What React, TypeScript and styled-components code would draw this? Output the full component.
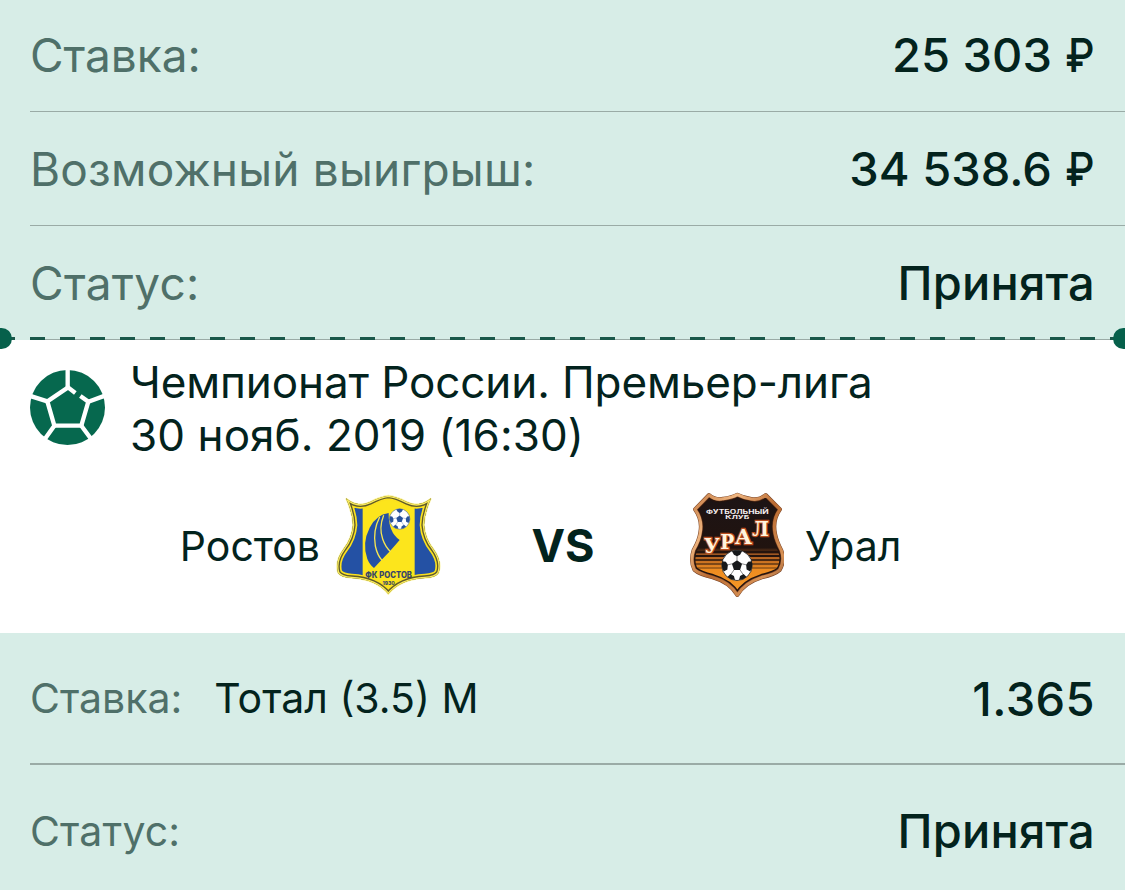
import * as React from "react";
import styled, { createGlobalStyle } from "styled-components";

const GlobalStyle = createGlobalStyle`
  body {
    margin: 0;
    background: #d7ede7;
    font-family: Inter, Roboto, "Liberation Sans", sans-serif;
    -webkit-font-smoothing: antialiased;
  }
`;

const Page = styled.main`
  width: 1125px;
  height: 890px;
  overflow: hidden;
  background: #d7ede7;
`;

const Summary = styled.section`
  position: relative;
`;

const Row = styled.div<{ $height: number; $line?: number; $top?: number }>`
  box-sizing: border-box;
  display: flex;
  align-items: center;
  height: ${(p) => p.$height}px;
  margin-left: 30px;
  padding-top: ${(p) => p.$top ?? 0}px;
  padding-right: 30px;
  border-bottom: ${(p) => p.$line ?? 0}px solid #9aaba6;
`;

const Text = styled.span<{ $size: number; $spacing?: number }>`
  font-size: ${(p) => p.$size}px;
  letter-spacing: ${(p) => p.$spacing ?? 0}px;
  line-height: 1.2;
  white-space: nowrap;
  color: #03231d;
`;

const Label = styled(Text)`
  color: #4f7069;
`;

const Value = styled(Text)`
  margin-left: auto;
  font-weight: 500;
`;

const Ruble = styled.span`
  display: inline-block;
  margin-left: -3px;
  font-weight: 550;
  transform: scaleX(0.87);
  transform-origin: right center;
`;

const Outcome = styled(Text)`
  margin-left: 32px;
`;

const Perforation = styled.div`
  position: absolute;
  left: 0;
  right: 0;
  bottom: 0;
  height: 3px;
  background: repeating-linear-gradient(to right, #1a584a 0 15px, transparent 15px 30px);
`;

const Notch = styled.i<{ $side: "left" | "right" }>`
  position: absolute;
  top: -9px;
  ${(p) => p.$side}: -9px;
  width: 21px;
  height: 21px;
  border-radius: 50%;
  background: #06604b;
`;

const Match = styled.section`
  box-sizing: border-box;
  height: 293px;
  padding-top: 16px;
  background: #fff;
`;

const MatchHeader = styled.header`
  display: flex;
  gap: 25px;
  padding-left: 30px;
  svg {
    margin-top: 14px;
  }
`;

const MatchInfo = styled.div`
  display: flex;
  flex-direction: column;
  ${Text} {
    line-height: 52.5px;
  }
`;

const Teams = styled.div`
  display: grid;
  grid-template-columns: 441px 244px 1fr;
  align-items: center;
  height: 106px;
  margin-top: 31px;
`;

const Team = styled.div<{ $home?: boolean }>`
  display: flex;
  align-items: center;
  justify-content: ${(p) => (p.$home ? "flex-end" : "flex-start")};
  gap: ${(p) => (p.$home ? 15 : 21)}px;
  padding-left: ${(p) => (p.$home ? 0 : 3)}px;
  ${Text} {
    padding-top: 3px;
  }
`;

const Versus = styled(Text)`
  padding-top: 2px;
  text-align: center;
  font-weight: 700;
`;

const BallIcon: React.FC = () => (
  <svg width="75" height="75" viewBox="90 209 225 225">
    <circle cx="202.5" cy="321.5" r="112.5" fill="#06684e" />
    <g fill="none" stroke="#fff" strokeWidth="13">
      <path d="M226 278 204 261 142 303 163 376H244L265 304 241 287" />
      <path d="M203 200V262M88 286 142 303M320 284 265 304M163 376 134 417M244 376 274 417" />
    </g>
  </svg>
);

// panels of a classic ball, drawn around 0,0 with a radius of 30
const Football: React.FC<{ x: number; y: number; scale: number; color: string }> = ({ x, y, scale, color }) => (
  <g transform={`translate(${x} ${y}) scale(${scale})`}>
    <circle r="30" fill="#fff" stroke={color} strokeWidth="1.5" />
    <g fill={color}>
      <path d="M0-10 10-3 6 9H-6L-10-3Z" />
      <path d="M-10-28Q0-32 10-28L6-21 0-18-6-21Z" />
      <path d="M29-8Q32 3 26 12L19 8 18-1 22-7Z" />
      <path d="M-29-8Q-32 3-26 12L-19 8-18-1-22-7Z" />
      <path d="M19 23Q12 29 4 29L6 21 13 17Z" />
      <path d="M-19 23Q-12 29-4 29L-6 21-13 17Z" />
    </g>
    <path d="M0-10V-19M10-3 18-1M-10-3-18-1M6 9 12 18M-6 9-12 18" stroke={color} strokeWidth="1" />
  </g>
);

const RostovCrest: React.FC = () => {
  const shield =
    "M78 55Q112 84 150 66Q184 49 205 47Q227 49 261 66Q299 84 333 55Q313 99 312 135Q315 176 340 207Q367 244 356 278Q348 292 315 294Q241 298 205 342Q169 298 95 294Q63 292 54 278Q44 243 71 207Q96 175 99 135Q98 98 78 55Z";
  return (
    <svg width="106" height="102" viewBox="45 42 318 306">
      <clipPath id="rostov-body">
        <path d={shield} />
      </clipPath>
      <path d={shield} fill="#fce51c" stroke="#fbf3a4" strokeWidth="5" />
      <g clipPath="url(#rostov-body)">
        <path d="M45 42H128V300H45ZM284 42H363V300H284Z" fill="#2451a4" />
        <path d={shield} fill="none" stroke="#fbe11d" strokeWidth="26" />
        <path d={shield} fill="none" stroke="#5f5a2a" strokeWidth="16" />
        <path d={shield} fill="none" stroke="#f9ea5c" strokeWidth="8" />
      </g>
      <path
        d="M206 99Q169 104 149 143Q125 190 142 237Q150 256 162 264L185 239 211 212 239 180Q205 157 206 99Z"
        fill="#2451a4"
      />
      <path
        d="M179 111Q158 152 166 198Q172 226 186 241M191 106Q176 144 188 177Q196 201 212 215"
        fill="none"
        stroke="#f7e650"
        strokeWidth="4"
      />
      <Football x={239} y={117} scale={1.02} color="#28529b" />
      <g fill="#35446a" textAnchor="middle" fontWeight="800">
        <text x="206" y="293" fontSize="25" textLength="140" lengthAdjust="spacingAndGlyphs">ФК РОСТОВ</text>
        <text x="206" y="315" fontSize="15" textLength="37" lengthAdjust="spacingAndGlyphs">1930</text>
      </g>
    </svg>
  );
};

const UralCrest: React.FC = () => {
  const shield =
    "M117 45Q138 62 160 56Q186 53 202 44Q219 53 244 57Q267 62 287 45L330 88Q307 119 315 160Q319 183 334 211Q345 243 329 270Q315 283 275 292Q224 308 202 345Q180 307 128 292Q87 282 73 269Q60 243 71 210Q88 181 91 157Q98 119 75 88Z";
  return (
    <svg width="96" height="106" viewBox="54 36 288 318">
      <defs>
        <linearGradient id="ural-field" x1="0" y1="0" x2="0" y2="1">
          <stop offset="0" stopColor="#1c1415" />
          <stop offset=".53" stopColor="#21130f" />
          <stop offset=".6" stopColor="#a65a23" />
          <stop offset=".74" stopColor="#ee8b20" />
          <stop offset="1" stopColor="#f79b28" />
        </linearGradient>
        <linearGradient id="ural-rim" x1="0" y1="0" x2="1" y2="1">
          <stop offset="0" stopColor="#c47b43" />
          <stop offset=".25" stopColor="#efb681" />
          <stop offset=".5" stopColor="#b96a31" />
          <stop offset=".8" stopColor="#d79155" />
          <stop offset="1" stopColor="#814727" />
        </linearGradient>
        <clipPath id="ural-body">
          <path d={shield} />
        </clipPath>
      </defs>
      <path d={shield} fill="url(#ural-field)" />
      <g clipPath="url(#ural-body)" stroke="#25140e">
        <path d="M60 216H340" strokeWidth="7" />
        <path d="M60 228H340" strokeWidth="6" />
        <path d="M60 240H340" strokeWidth="4" />
        <path d="M60 252H340" strokeWidth="3" />
        <path d="M60 264H340" strokeWidth="2" />
        <path d={shield} fill="none" strokeWidth="20" />
      </g>
      <path d={shield} fill="none" stroke="#774225" strokeWidth="12" strokeLinejoin="round" />
      <path d={shield} fill="none" stroke="url(#ural-rim)" strokeWidth="9" strokeLinejoin="round" />
      <g fill="#f4eeee" textAnchor="middle" fontWeight="700">
        <text x="202" y="101" fontSize="17" textLength="188" lengthAdjust="spacingAndGlyphs">ФУТБОЛЬНЫЙ</text>
        <text x="202" y="117" fontSize="16" textLength="72" lengthAdjust="spacingAndGlyphs">КЛУБ</text>
      </g>
      <g
        fill="#fff4de"
        stroke="#b94e20"
        strokeWidth="7"
        paintOrder="stroke"
        fontFamily="'DejaVu Serif', serif"
        fontWeight="700"
        fontSize="62"
      >
        <text x="102" y="219" textLength="47" lengthAdjust="spacingAndGlyphs">У</text>
        <text x="151" y="207" textLength="42" lengthAdjust="spacingAndGlyphs">Р</text>
        <text x="194" y="192" textLength="52" lengthAdjust="spacingAndGlyphs">А</text>
        <text x="247" y="168" textLength="50" lengthAdjust="spacingAndGlyphs">Л</text>
      </g>
      <Football x={201} y={256} scale={1.52} color="#17191b" />
    </svg>
  );
};

const App: React.FC = () => {
  return (
    <Page>
      <GlobalStyle />
      <Summary>
        <Row $height={112} $line={1}>
          <Label $size={46}>Ставка:</Label>
          <Value $size={47}>
            25 303 <Ruble>₽</Ruble>
          </Value>
        </Row>
        <Row $height={114} $line={1} $top={2}>
          <Label $size={46} $spacing={0.2}>Возможный выигрыш:</Label>
          <Value $size={47}>
            34 538.6 <Ruble>₽</Ruble>
          </Value>
        </Row>
        <Row $height={114} $line={1} $top={2}>
          <Label $size={46} $spacing={0.3}>Статус:</Label>
          <Value $size={47} $spacing={0.2}>Принята</Value>
        </Row>
        <Perforation>
          <Notch $side="left" />
          <Notch $side="right" />
        </Perforation>
      </Summary>

      <Match>
        <MatchHeader>
          <BallIcon />
          <MatchInfo>
            <Text $size={44} $spacing={-0.1}>Чемпионат России. Премьер-лига</Text>
            <Text $size={44} $spacing={0.08}>30 нояб. 2019 (16:30)</Text>
          </MatchInfo>
        </MatchHeader>
        <Teams>
          <Team $home>
            <Text $size={41}>Ростов</Text>
            <RostovCrest />
          </Team>
          <Versus $size={45}>VS</Versus>
          <Team>
            <UralCrest />
            <Text $size={41}>Урал</Text>
          </Team>
        </Teams>
      </Match>

      <Row $height={132} $line={2} $top={2}>
        <Label $size={41}>Ставка:</Label>
        <Outcome $size={41}>Тотал (3.5) М</Outcome>
        <Value $size={47} $spacing={0.4}>1.365</Value>
      </Row>
      <Row $height={133}>
        <Label $size={41} $spacing={0.15}>Статус:</Label>
        <Value $size={47} $spacing={0.2}>Принята</Value>
      </Row>
    </Page>
  );
};

export default App;
